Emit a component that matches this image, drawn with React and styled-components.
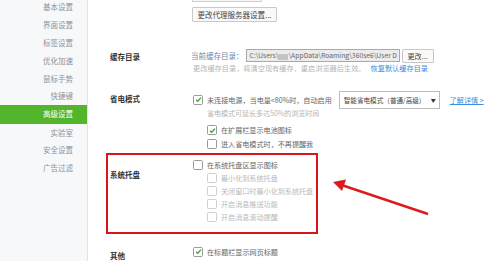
import styled, { createGlobalStyle } from 'styled-components';

const Global = createGlobalStyle`
  html, body, #root { margin: 0; height: 100%; overflow: hidden; }
  *, *::before, *::after { box-sizing: border-box; }
  body {
    background: #fff;
    font-family: "Noto Sans CJK SC", "Noto Sans", sans-serif;
    font-size: 7.5px;
    color: #555;
  }
`;

const Page = styled.div`
  position: relative;
  display: flex;
  height: 100%;
`;

const Sidebar = styled.nav`
  width: 88px;
  flex: none;
  background: #f7f8fa;
  border-right: 1px solid #dfe3e8;
  display: flex;
  flex-direction: column;
`;

const NavList = styled.div`
  margin-top: -1.6px;
  display: flex;
  flex-direction: column;
`;

const NavItem = styled.div`
  height: 17.8px;
  line-height: 17.8px;
  text-align: right;
  padding-right: 14px;
  color: ${p => (p.$active ? '#fff' : '#8c939c')};
  background: ${p => (p.$active ? '#52b52c' : 'transparent')};
  ${p => p.$active && 'height: 18.5px; line-height: 18.5px;'}
`;

const Main = styled.main`
  flex: 1;
  display: flex;
  flex-direction: column;
`;

const Section = styled.div`
  display: grid;
  grid-template-columns: 83px 1fr;
  padding-left: 22px;
  margin-top: ${p => p.$top || 0}px;
`;

const Highlight = styled.div`
  margin-left: 18px;
  margin-top: ${p => p.$top || 0}px;
  width: 212px;
  height: 82px;
  border: 2px solid #d9151c;
  display: grid;
  grid-template-columns: 83px 1fr;
  padding-left: 2px;
`;

const Label = styled.div`
  font-weight: 700;
  color: #333;
  padding-top: ${p => p.$pad || 0}px;
  white-space: nowrap;
`;

const Col = styled.div`
  display: flex;
  flex-direction: column;
  padding-top: ${p => p.$pad || 0}px;
`;

const Stub = styled.div`
  margin-left: 104px;
  margin-top: -9px;
  width: 70px;
  height: 11px;
  border: 1px solid #cfcfcf;
  background: #f7f7f7;
`;

const Button = styled.button`
  font: inherit;
  color: #444;
  height: ${p => p.$h || 15}px;
  padding: 0 ${p => p.$px || 7}px;
  border: 1px solid #c9c9c9;
  background: #f9f9f9;
  border-radius: 1px;
  white-space: nowrap;
  flex: none;
`;

const ProxyButton = styled(Button)`
  margin-left: 104px;
  margin-top: 5px;
  width: 85px;
  padding: 0;
  align-self: flex-start;
`;

const Row = styled.div`
  display: flex;
  align-items: center;
  gap: ${p => p.$gap || 4}px;
  height: ${p => p.$h || 13}px;
  margin-left: ${p => p.$indent || 0}px;
  margin-top: ${p => p.$top || 0}px;
  white-space: nowrap;
  font-size: 7.1px;
  color: ${p => (p.$disabled ? '#b9b9b9' : '#666')};
`;

const PathLabel = styled.span`
  color: #6f88a8;
  font-size: 7.5px;
  margin-left: -2px;
`;

const PathInput = styled.div`
  width: 154px;
  flex: none;
  height: 13px;
  line-height: 11px;
  border: 1px solid #a9a9a9;
  background: #ececec;
  color: #666;
  padding-left: 3px;
  font-size: 6.8px;
  overflow: hidden;
  white-space: nowrap;
`;

const Blur = styled.span`
  display: inline-block;
  width: 10px;
  height: 6px;
  background: #c4c4c4;
  vertical-align: middle;
`;

const Hint = styled.div`
  color: #b5b5b5;
  font-size: ${p => p.$size || 7}px;
  height: ${p => p.$h || 10}px;
  line-height: ${p => p.$h || 10}px;
  margin-left: ${p => p.$indent || 0}px;
  white-space: nowrap;
`;

const Link = styled.a`
  color: #3b8ee0;
  text-decoration: ${p => (p.$underline ? 'underline' : 'none')};
  margin-left: ${p => p.$left || 0}px;
`;

const Select = styled.div`
  display: flex;
  align-items: center;
  justify-content: space-between;
  width: 101px;
  flex: none;
  height: 18px;
  border: 1px solid #bdbdbd;
  padding: 0 3px 0 4px;
  color: #444;
  font-size: 6.6px;
  margin-left: 3px;
`;

const Caret = styled.span`
  font-size: 5px;
  color: #333;
`;

const Box = styled.span`
  display: inline-flex;
  align-items: center;
  justify-content: center;
  width: 10px;
  height: 10px;
  flex: none;
  border: 1px solid ${p => (p.$disabled ? '#d0d0d0' : '#9a9a9a')};
  border-radius: 1.5px;
  background: #fff;
`;

const Check = ({ checked, disabled }) => (
  <Box $disabled={disabled}>
    {checked && (
      <svg width="7" height="7" viewBox="0 0 8 8">
        <path d="M1.2 4.2 L3.2 6 L6.8 1.8" fill="none" stroke="#3aa52a" strokeWidth="1.5" />
      </svg>
    )}
  </Box>
);

const Arrow = styled.svg`
  position: absolute;
  left: 0;
  top: 0;
  pointer-events: none;
`;

const nav = ['基本设置', '界面设置', '标签设置', '优化加速', '鼠标手势', '快捷键', '高级设置', '实验室', '安全设置', '广告过滤'];

const trayItems = ['最小化到系统托盘', '关闭窗口时最小化到系统托盘', '开启消息推送功能', '开启消息滚动提醒'];

export default function App() {
  return (
    <Page>
      <Global />
      <Sidebar>
        <NavList>
          {nav.map(n => (
            <NavItem key={n} $active={n === '高级设置'}>{n}</NavItem>
          ))}
        </NavList>
      </Sidebar>
      <Main>
        <Stub />
        <ProxyButton>更改代理服务器设置...</ProxyButton>

        <Section $top={27}>
          <Label $pad={2}>缓存目录</Label>
          <Col>
            <Row $h={14} $gap={2}>
              <PathLabel>当前缓存目录：</PathLabel>
              <PathInput>C:\Users\<Blur />\AppData\Roaming\360se6\User D</PathInput>
              <Button $h={14} $px={5}>更改...</Button>
            </Row>
            <Hint $h={11} $size={7.2}>
              更改缓存目录，将清空现有缓存，重启浏览器后生效。
              <Link $left={5}>恢复默认缓存目录</Link>
            </Hint>
          </Col>
        </Section>

        <Section $top={17}>
          <Label $pad={2}>省电模式</Label>
          <Col>
            <Row $h={18}>
              <Check checked />
              <span>未连接电源，当电量&lt;80%时，自动启用</span>
              <Select>
                <span>智能省电模式（普通/高级）</span>
                <Caret>▼</Caret>
              </Select>
              <Link $underline $left={6}>了解详情 &gt;</Link>
            </Row>
            <Hint $h={9} $indent={14}>省电模式可延长多达50%的浏览时间</Hint>
            <Row $indent={14} $top={6}>
              <Check checked />
              <span>在扩展栏显示电池图标</span>
            </Row>
            <Row $indent={14} $top={1}>
              <Check />
              <span>进入省电模式时，不再提醒我</span>
            </Row>
          </Col>
        </Section>

        <Highlight $top={2}>
          <Label $pad={14}>系统托盘</Label>
          <Col $pad={4}>
            <Row>
              <Check />
              <span>在系统托盘区显示图标</span>
            </Row>
            {trayItems.map(t => (
              <Row key={t} $indent={14} $disabled>
                <Check disabled />
                <span>{t}</span>
              </Row>
            ))}
          </Col>
        </Highlight>

        <Section $top={11}>
          <Label $pad={5}>其他</Label>
          <Col>
            <Row>
              <Check checked />
              <span>在标题栏显示网页标题</span>
            </Row>
          </Col>
        </Section>
      </Main>
      <Arrow width="499" height="261" viewBox="0 0 499 261">
        <line x1="428" y1="214" x2="343" y2="185.5" stroke="#dc1a1f" strokeWidth="2.4" />
        <polygon points="333,182 346,179.5 342,191" fill="#dc1a1f" />
      </Arrow>
    </Page>
  );
}
